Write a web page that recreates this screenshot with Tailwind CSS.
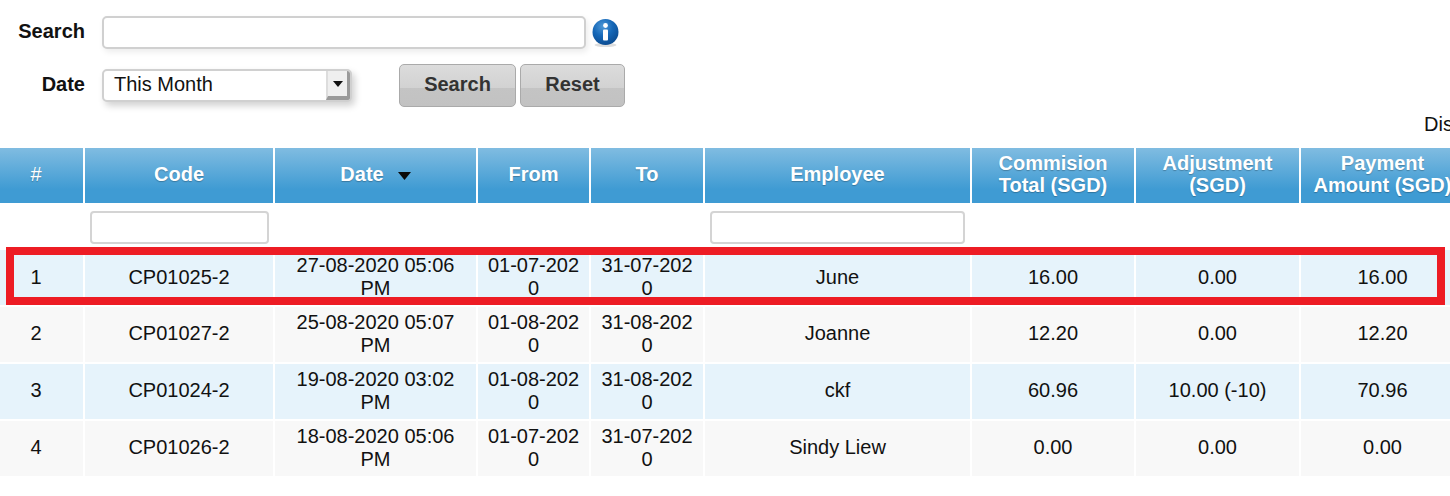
<!DOCTYPE html>
<html>
<head>
<meta charset="utf-8">
<script src="https://cdn.jsdelivr.net/npm/@tailwindcss/browser@4"></script>
</head>
<body class="bg-white">
<div class="relative w-[1450px] h-[496px] overflow-hidden font-['Liberation_Sans',Arial,sans-serif] text-[20px] leading-[23px] text-[#111]">
  <div class="pt-[16px]">
    <div class="flex items-center">
      <label class="w-[85px] text-right font-bold pb-[2px]">Search</label>
      <div class="ml-[17px] w-[484px] h-[33px] bg-white border-2 border-[#d0d0d0] rounded-[5px] shadow-[2px_3px_6px_rgba(0,0,0,0.08)]"></div>
      <svg class="ml-[6px] mt-[1px]" width="27" height="30" viewBox="0 0 27 30">
        <defs>
          <radialGradient id="ib" cx="40%" cy="28%" r="75%">
            <stop offset="0" stop-color="#4d97d6"/>
            <stop offset="0.5" stop-color="#1668b8"/>
            <stop offset="1" stop-color="#0b4a8f"/>
          </radialGradient>
        </defs>
        <ellipse cx="13.5" cy="27" rx="11" ry="2" fill="#ddd"/>
        <circle cx="13.5" cy="14" r="13" fill="url(#ib)"/>
        <circle cx="13.5" cy="7.500" r="2.400" fill="#fff"/>
        <rect x="11" y="11.500" width="5" height="11" rx="1" fill="#fff"/>
      </svg>
    </div>
    <div class="flex items-center mt-[15px] h-[43px]">
      <label class="w-[85px] text-right font-bold pb-[2px]">Date</label>
      <div class="ml-[17px] w-[250px] h-[33px] flex items-stretch bg-white border-2 border-[#d0d0d0] rounded-[5px] shadow-[3px_4px_7px_rgba(0,0,0,0.18)] overflow-hidden">
        <span class="flex-1 pl-[10px] leading-[27px]">This Month</span>
        <span class="w-[24px] flex items-center justify-center bg-[#efefef] border-l-2 border-b-[4px] border-r-[3px] border-l-[#ddd] border-b-[#9a9a9a] border-r-[#9a9a9a]">
          <svg width="12" height="8" viewBox="0 0 12 8"><path d="M1 1h10L6 7z" fill="#111"/></svg>
        </span>
      </div>
      <button class="ml-[47px] w-[117px] h-[43px] pb-[2px] font-bold text-[#333] border border-[#aaa] rounded-[5px] bg-[linear-gradient(#dcdcdc_0%,#d2d2d2_55%,#c4c4c4_56%,#c2c2c2_100%)]">Search</button>
      <button class="ml-[4px] w-[105px] h-[43px] pb-[2px] font-bold text-[#333] border border-[#aaa] rounded-[5px] bg-[linear-gradient(#dcdcdc_0%,#d2d2d2_55%,#c4c4c4_56%,#c2c2c2_100%)]">Reset</button>
    </div>
  </div>
  <div class="mt-[6px] pl-[1424px] whitespace-nowrap h-[23px]">Display</div>
  <table class="mt-[10px] -ml-[13px] w-[1479px] table-fixed border-separate border-spacing-[2px] text-center">
    <colgroup>
      <col class="w-[94px]"><col class="w-[188px]"><col class="w-[201px]"><col class="w-[111px]"><col class="w-[112px]"><col class="w-[265px]"><col class="w-[162px]"><col class="w-[163px]"><col class="w-[163px]">
    </colgroup>
    <thead>
      <tr class="h-[55px] text-white font-bold leading-[22px] [&>th]:bg-[linear-gradient(#80bce1_0%,#3f9bd3_75%,#3f9bd3_100%)] [&>th]:p-0 [&>th]:pb-[4px] [&>th]:[text-shadow:0_1px_1px_rgba(0,0,0,0.25)]">
        <th class="font-normal">#</th><th>Code</th>
        <th>Date<svg class="inline ml-[14px] align-[1px]" width="13" height="8" viewBox="0 0 13 8"><path d="M0 0h13L6.500 8z" fill="#0a0a0a"/></svg></th>
        <th>From</th><th>To</th><th>Employee</th><th>Commision<br>Total (SGD)</th><th>Adjustment<br>(SGD)</th><th>Payment<br>Amount (SGD)</th>
      </tr>
      <tr class="h-[43px]">
        <td></td>
        <td class="p-0 pl-[5px] pr-[4px] pt-[2px]"><div class="h-[33px] bg-white border-2 border-[#d4d4d4] rounded-[4px]"></div></td>
        <td></td><td></td><td></td>
        <td class="p-0 pl-[5px] pr-[5px] pt-[2px]"><div class="h-[33px] bg-white border-2 border-[#d4d4d4] rounded-[4px]"></div></td>
        <td></td><td></td><td></td>
      </tr>
    </thead>
    <tbody>
      <tr class="h-[55px] [&>td]:bg-[#e6f3fb] [&>td]:p-0 [&>td]:pb-[1px]">
        <td class="!pb-0">1</td><td class="!pb-0">CP01025-2</td><td class="!px-[10px] !pb-[2px]">27-08-2020 05:06 PM</td><td class="!px-[8px] !pb-[2px] break-all">01-07-2020</td><td class="!px-[8px] !pb-[2px] break-all">31-07-2020</td><td class="!pb-0">June</td><td class="!pb-0">16.00</td><td class="!pb-0">0.00</td><td class="!pb-0">16.00</td>
      </tr>
      <tr class="h-[55px] [&>td]:bg-[#f8f8f8] [&>td]:p-0 [&>td]:pb-[2px]">
        <td>2</td><td>CP01027-2</td><td class="!px-[10px]">25-08-2020 05:07 PM</td><td class="!px-[8px] break-all">01-08-2020</td><td class="!px-[8px] break-all">31-08-2020</td><td>Joanne</td><td>12.20</td><td>0.00</td><td>12.20</td>
      </tr>
      <tr class="h-[55px] [&>td]:bg-[#e6f3fb] [&>td]:p-0 [&>td]:pb-[2px]">
        <td>3</td><td>CP01024-2</td><td class="!px-[10px]">19-08-2020 03:02 PM</td><td class="!px-[8px] break-all">01-08-2020</td><td class="!px-[8px] break-all">31-08-2020</td><td>ckf</td><td>60.96</td><td>10.00 (-10)</td><td>70.96</td>
      </tr>
      <tr class="h-[55px] [&>td]:bg-[#f8f8f8] [&>td]:p-0 [&>td]:pb-[2px]">
        <td>4</td><td>CP01026-2</td><td class="!px-[10px]">18-08-2020 05:06 PM</td><td class="!px-[8px] break-all">01-07-2020</td><td class="!px-[8px] break-all">31-07-2020</td><td>Sindy Liew</td><td>0.00</td><td>0.00</td><td>0.00</td>
      </tr>
    </tbody>
  </table>
  <div class="absolute left-[6px] top-[247px] w-[1439px] h-[58px] border-[8px] border-[#ed1c24]"></div>
</div>
</body>
</html>
